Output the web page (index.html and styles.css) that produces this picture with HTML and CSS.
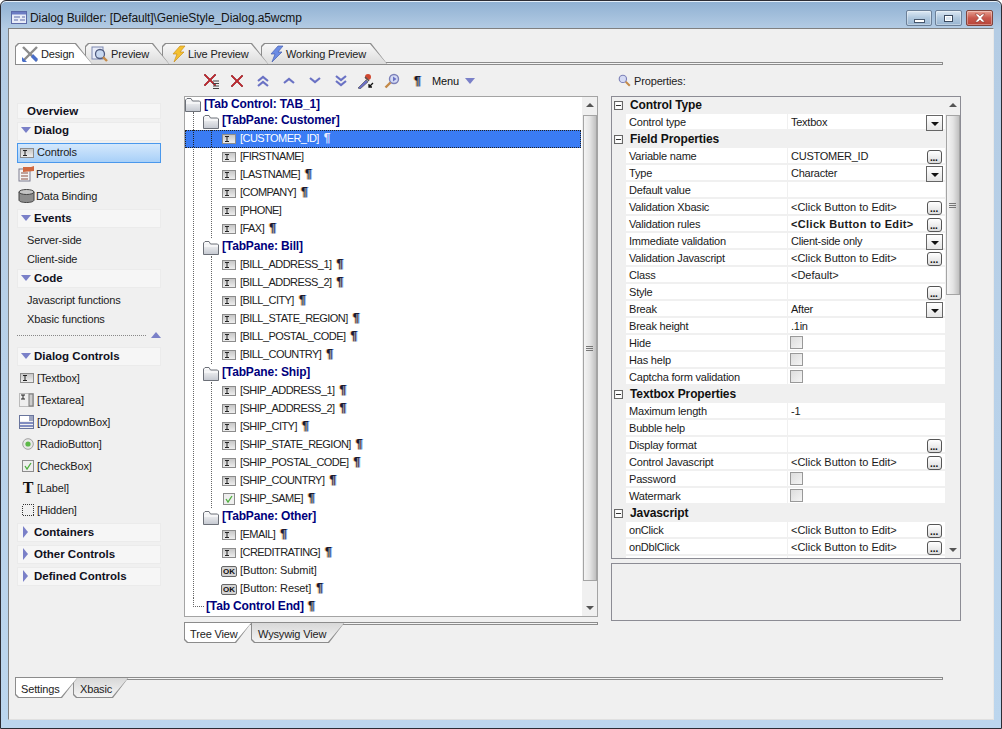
FILE: index.html
```html
<!DOCTYPE html>
<html lang="en">
<head>
    <meta charset="UTF-8">
    <title>Dialog Builder</title>
    <link rel="stylesheet" href="styles.css">
</head>
<body>
<svg class="defs" width="0" height="0">
    <defs>
        <linearGradient id="folderFill" x1="0" y1="0" x2="0" y2="1"><stop offset="0" stop-color="#fff"/><stop offset="1" stop-color="#c4c8d0"/></linearGradient>
        <linearGradient id="boxFill" x1="0" y1="0" x2="0" y2="1"><stop offset="0" stop-color="#c4c4c4"/><stop offset="1" stop-color="#f0f0f0"/></linearGradient>
        <symbol id="i-textbox" viewBox="0 0 14 10">
            <rect x=".5" y=".5" width="13" height="9" fill="url(#boxFill)" stroke="#8c8c8c"/>
            <path d="M3 2.500h4M3 7.500h4M5 2.500v5" fill="none" stroke="#222"/>
        </symbol>
        <symbol id="i-folder" viewBox="0 0 16 15">
            <path d="M.5 14.500V3L2 1.500h4L7.500 4h7l1 1v9.500z" fill="url(#folderFill)" stroke="#6c7078"/>
            <path d="M1 6h14" stroke="#fff"/>
        </symbol>
        <symbol id="i-check" viewBox="0 0 12 12">
            <rect x=".5" y=".5" width="11" height="11" fill="#eee" stroke="#8c8c8c"/>
            <path d="M3 6l2 3 4-6" fill="none" stroke="#4caf3c" stroke-width="1.300"/>
        </symbol>
        <symbol id="i-cross" viewBox="0 0 14 14">
            <path d="M2 1l5 5 5-5 1 1-5 5 5 5-1 1-5-5-5 5-1-1 5-5-5-5z" fill="#c8242c" stroke="#8a1a20" stroke-width=".6"/>
        </symbol>
        <symbol id="i-chevron" viewBox="0 0 12 7">
            <path d="M1 6l5-4 5 4" fill="none" stroke="#6a72c4" stroke-width="2.200"/>
        </symbol>
        <symbol id="i-lens" viewBox="0 0 16 16">
            <circle cx="10" cy="6" r="4.500" fill="#d4daf4" stroke="#7c80b8" stroke-width="1.400"/>
            <path d="M6.500 9.500l-5 5" stroke="#c48a48" stroke-width="2.400"/>
        </symbol>
    </defs>
</svg>

<div class="window">
    <div class="titlebar">
        <svg class="title-icon" width="16" height="13" viewBox="0 0 16 13">
            <rect x=".5" y=".5" width="15" height="12" fill="#e8ecf8" stroke="#5c6aa8"/>
            <rect x="1" y="1" width="14" height="2.500" fill="#6c7cc4"/>
            <path d="M3 6h6M3 9h4M11 6h3M9 9h5" stroke="#5c6aa8"/>
        </svg>
        <span class="title-text">Dialog Builder: [Default]\GenieStyle_Dialog.a5wcmp</span>
        <div class="win-buttons">
            <div class="win-btn"><span class="glyph-min"></span></div>
            <div class="win-btn wide"><span class="glyph-max"></span></div>
            <div class="win-btn wide win-close">
                <svg width="14" height="10" viewBox="0 0 14 10"><path d="M2 1h3l2 2 2-2h3L8.500 5 12 9H9L7 7 5 9H2l3.500-4z" fill="#fff" stroke="#8a3a30" stroke-width=".6"/></svg>
            </div>
        </div>
    </div>

    <div class="client">
        <div class="top-tabs">
            <div class="tab active w-design">
                <svg width="18" height="18" viewBox="0 0 18 18"><path d="M2 2l14 14" stroke="#8c8c8c" stroke-width="2.400"/><path d="M16 2L3 15" stroke="#8c8c8c" stroke-width="2.400"/><path d="M1 12l5 5-4 0-1-1z" fill="#4a6ec8"/><path d="M12 9l5 5-2 3-5-5z" fill="#4a6ec8"/></svg>
                <span>Design</span>
            </div>
            <div class="tab w-preview">
                <svg width="18" height="18" viewBox="0 0 18 18"><rect x="1" y="2" width="11" height="12" fill="#e8ecf8" stroke="#7c88b0"/><circle cx="9" cy="9" r="4.500" fill="#c8d8f0" stroke="#505c80" stroke-width="1.300"/><path d="M12 12l4 4" stroke="#c48a48" stroke-width="2.400"/></svg>
                <span>Preview</span>
            </div>
            <div class="tab w-live">
                <svg width="14" height="18" viewBox="0 0 14 18"><path d="M8 1h5L8 7h4L2 17l3-8H1z" fill="#f4c030" stroke="#c89020" stroke-width=".7"/></svg>
                <span>Live Preview</span>
            </div>
            <div class="tab w-working">
                <svg width="14" height="18" viewBox="0 0 14 18"><path d="M8 1h5L8 7h4L2 17l3-8H1z" fill="#6c8ce4" stroke="#4860b0" stroke-width=".7"/></svg>
                <span>Working Preview</span>
            </div>
            <div class="strip-line"></div>
        </div>

        <div class="main">
            <div class="sidebar">
                <div class="side-head head-short"><span class="no-arrow">Overview</span></div>
                <div class="side-head head-dialog"><i class="arrow-down"></i>Dialog</div>
                <div class="side-item selected"><svg width="14" height="10"><use href="#i-textbox"/></svg>Controls</div>
                <div class="side-item">
                    <svg class="ic-side" width="17" height="16" viewBox="0 0 17 16"><rect x="1" y="3" width="11" height="12" fill="#f4f4f4" stroke="#7c7c90"/><path d="M3 7h7M3 10h7M3 13h7" stroke="#8c5040"/><path d="M5 1h8l3-1v5l-11 1z" fill="#d06840"/></svg>Properties
                </div>
                <div class="side-item">
                    <svg class="ic-side" width="17" height="14" viewBox="0 0 17 14"><path d="M1 3v8c0 1.500 3 2.500 7.500 2.500S16 12.500 16 11V3z" fill="#8c8c8c" stroke="#444"/><ellipse cx="8.500" cy="3" rx="7.500" ry="2.500" fill="#c4c4c4" stroke="#444"/></svg>Data Binding
                </div>
                <div class="side-head head-group"><i class="arrow-down"></i>Events</div>
                <div class="side-link">Server-side</div>
                <div class="side-link">Client-side</div>
                <div class="side-head head-code"><i class="arrow-down"></i>Code</div>
                <div class="side-link first-link">Javascript functions</div>
                <div class="side-link">Xbasic functions</div>
                <div class="side-divider"><div class="dots"></div><i class="arrow-up"></i></div>
                <div class="side-head"><i class="arrow-down"></i>Dialog Controls</div>
                <div class="side-item control first-control"><svg class="ic-wide" width="14" height="10"><use href="#i-textbox"/></svg>[Textbox]</div>
                <div class="side-item control">
                    <svg width="15" height="14" viewBox="0 0 15 14"><rect x=".5" y=".5" width="14" height="13" fill="#eee" stroke="#bbb"/><path d="M2 2h4M2 6h4M4 2v4" stroke="#222"/><rect x="10" y="1" width="4" height="12" fill="#ccc" stroke="#777"/></svg>[Textarea]
                </div>
                <div class="side-item control">
                    <svg width="15" height="14" viewBox="0 0 15 14"><rect x=".5" y=".5" width="14" height="13" fill="#f0f0f0" stroke="#68749c"/><rect x="1" y="1" width="10" height="5" fill="#fff"/><rect x="10" y="1" width="4" height="5" fill="#9ca4c0"/><path d="M1 8h13M1 11h13" stroke="#5c6cb0" stroke-width="1.500"/></svg>[DropdownBox]
                </div>
                <div class="side-item control">
                    <svg class="ic-small" width="12" height="12" viewBox="0 0 12 12"><circle cx="6" cy="6" r="5.300" fill="#e8e8e8" stroke="#a0a0a0"/><circle cx="6" cy="6" r="2.600" fill="#5cb848"/></svg>[RadioButton]
                </div>
                <div class="side-item control"><svg class="ic-small" width="12" height="12"><use href="#i-check"/></svg>[CheckBox]</div>
                <div class="side-item control"><span class="label-t">T</span>[Label]</div>
                <div class="side-item control">
                    <svg class="ic-small" width="12" height="12" viewBox="0 0 12 12"><rect x=".5" y=".5" width="11" height="11" fill="none" stroke="#333" stroke-dasharray="1 1" shape-rendering="crispEdges"/></svg>[Hidden]
                </div>
                <div class="side-head head-group"><i class="arrow-right"></i>Containers</div>
                <div class="side-head head-gap"><i class="arrow-right"></i>Other Controls</div>
                <div class="side-head head-gap"><i class="arrow-right"></i>Defined Controls</div>
            </div>

            <div class="center">
                <div class="toolbar">
                    <svg class="tool t-first" width="17" height="16" viewBox="0 0 17 16"><use href="#i-cross" width="14" height="14"/><path d="M10 8h6M10 10.500h6M10 13h6M10 15.500h6" stroke="#444"/></svg>
                    <svg class="tool t-cross" width="14" height="14"><use href="#i-cross"/></svg>
                    <svg class="tool" width="12" height="12" viewBox="0 0 12 12"><use href="#i-chevron" width="12" height="7"/><use href="#i-chevron" y="5" width="12" height="7"/></svg>
                    <svg class="tool" width="12" height="7"><use href="#i-chevron"/></svg>
                    <svg class="tool flip" width="12" height="7"><use href="#i-chevron"/></svg>
                    <svg class="tool flip t-gap" width="12" height="12" viewBox="0 0 12 12"><use href="#i-chevron" width="12" height="7"/><use href="#i-chevron" y="5" width="12" height="7"/></svg>
                    <svg class="tool t-gap" width="17" height="16" viewBox="0 0 17 16"><path d="M1 15l8-8 2 2-8 7z" fill="#6c70c8" stroke="#444" stroke-width=".6"/><circle cx="11" cy="4" r="3" fill="#d04830"/><path d="M8 4l4 4" stroke="#555" stroke-width="1.500"/><path d="M16 10l-4 4M12 11v3h3" fill="none" stroke="#111" stroke-width="1.300"/></svg>
                    <svg class="tool t-lens" width="16" height="16" viewBox="0 0 16 16"><use href="#i-lens" width="16" height="16"/><path d="M9 3.500v5l3.500-2.500z" fill="#6a72c4"/></svg>
                    <span class="pil tool-pil">¶</span>
                    <span class="tool-menu">Menu</span>
                    <i class="arrow-down menu-arrow"></i>
                </div>

                <div class="tree-panel">
                    <div class="tree">
                        <div class="tree-root"><svg width="16" height="15"><use href="#i-folder"/></svg><b>[Tab Control: TAB_1]</b></div>
                        <div class="level1">
                            <div class="pane"><svg width="16" height="15"><use href="#i-folder"/></svg><b>[TabPane: Customer]</b></div>
                            <div class="level2">
                                <div class="row current"><svg width="14" height="10"><use href="#i-textbox"/></svg>[CUSTOMER_ID]<span class="pil">¶</span></div>
                                <div class="row"><svg width="14" height="10"><use href="#i-textbox"/></svg>[FIRSTNAME]</div>
                                <div class="row"><svg width="14" height="10"><use href="#i-textbox"/></svg>[LASTNAME]<span class="pil">¶</span></div>
                                <div class="row"><svg width="14" height="10"><use href="#i-textbox"/></svg>[COMPANY]<span class="pil">¶</span></div>
                                <div class="row"><svg width="14" height="10"><use href="#i-textbox"/></svg>[PHONE]</div>
                                <div class="row"><svg width="14" height="10"><use href="#i-textbox"/></svg>[FAX]<span class="pil">¶</span></div>
                            </div>
                            <div class="pane"><svg width="16" height="15"><use href="#i-folder"/></svg><b>[TabPane: Bill]</b></div>
                            <div class="level2">
                                <div class="row"><svg width="14" height="10"><use href="#i-textbox"/></svg>[BILL_ADDRESS_1]<span class="pil">¶</span></div>
                                <div class="row"><svg width="14" height="10"><use href="#i-textbox"/></svg>[BILL_ADDRESS_2]<span class="pil">¶</span></div>
                                <div class="row"><svg width="14" height="10"><use href="#i-textbox"/></svg>[BILL_CITY]<span class="pil">¶</span></div>
                                <div class="row"><svg width="14" height="10"><use href="#i-textbox"/></svg>[BILL_STATE_REGION]<span class="pil">¶</span></div>
                                <div class="row"><svg width="14" height="10"><use href="#i-textbox"/></svg>[BILL_POSTAL_CODE]<span class="pil">¶</span></div>
                                <div class="row"><svg width="14" height="10"><use href="#i-textbox"/></svg>[BILL_COUNTRY]<span class="pil">¶</span></div>
                            </div>
                            <div class="pane"><svg width="16" height="15"><use href="#i-folder"/></svg><b>[TabPane: Ship]</b></div>
                            <div class="level2">
                                <div class="row"><svg width="14" height="10"><use href="#i-textbox"/></svg>[SHIP_ADDRESS_1]<span class="pil">¶</span></div>
                                <div class="row"><svg width="14" height="10"><use href="#i-textbox"/></svg>[SHIP_ADDRESS_2]<span class="pil">¶</span></div>
                                <div class="row"><svg width="14" height="10"><use href="#i-textbox"/></svg>[SHIP_CITY]<span class="pil">¶</span></div>
                                <div class="row"><svg width="14" height="10"><use href="#i-textbox"/></svg>[SHIP_STATE_REGION]<span class="pil">¶</span></div>
                                <div class="row"><svg width="14" height="10"><use href="#i-textbox"/></svg>[SHIP_POSTAL_CODE]<span class="pil">¶</span></div>
                                <div class="row"><svg width="14" height="10"><use href="#i-textbox"/></svg>[SHIP_COUNTRY]<span class="pil">¶</span></div>
                                <div class="row"><svg class="row-check" width="12" height="12"><use href="#i-check"/></svg>[SHIP_SAME]<span class="pil">¶</span></div>
                            </div>
                            <div class="pane"><svg width="16" height="15"><use href="#i-folder"/></svg><b>[TabPane: Other]</b></div>
                            <div class="level2 no-line">
                                <div class="row"><svg width="14" height="10"><use href="#i-textbox"/></svg>[EMAIL]<span class="pil">¶</span></div>
                                <div class="row"><svg width="14" height="10"><use href="#i-textbox"/></svg>[CREDITRATING]<span class="pil">¶</span></div>
                                <div class="row btn-row"><span class="ok-icon">OK</span>[Button: Submit]</div>
                                <div class="row btn-row"><span class="ok-icon">OK</span>[Button: Reset]<span class="pil">¶</span></div>
                            </div>
                        </div>
                        <div class="tree-end"><span class="end-dots"></span><b>[Tab Control End]</b><span class="pil">¶</span></div>
                    </div>
                    <div class="scrollbar">
                        <i class="sb-up"></i>
                        <div class="sb-thumb tree-thumb"><span class="grip"></span></div>
                        <i class="sb-down"></i>
                    </div>
                </div>

                <div class="low-tabs">
                    <div class="low-line"></div>
                    <div class="ltab active w-tree">Tree View</div>
                    <div class="ltab w-wysywig">Wysywig View</div>
                </div>
            </div>

            <div class="props">
                <div class="props-head"><svg width="13" height="13" viewBox="0 0 16 16" class="flip-x"><use href="#i-lens" width="16" height="16"/></svg><span>Properties:</span></div>
                <div class="props-panel">
                    <div class="prop-list">
                        <div class="section"><i class="minus"></i>Control Type</div>
                        <div class="prop"><div class="p-name">Control type</div><div class="p-val">Textbox<i class="dd"></i></div></div>
                        <div class="section"><i class="minus"></i>Field Properties</div>
                        <div class="prop"><div class="p-name">Variable name</div><div class="p-val">CUSTOMER_ID<i class="more"></i></div></div>
                        <div class="prop"><div class="p-name">Type</div><div class="p-val">Character<i class="dd"></i></div></div>
                        <div class="prop"><div class="p-name">Default value</div><div class="p-val"></div></div>
                        <div class="prop"><div class="p-name">Validation Xbasic</div><div class="p-val click">&lt;Click Button to Edit&gt;<i class="more"></i></div></div>
                        <div class="prop"><div class="p-name">Validation rules</div><div class="p-val"><b>&lt;Click Button to Edit&gt;</b><i class="more"></i></div></div>
                        <div class="prop"><div class="p-name">Immediate validation</div><div class="p-val">Client-side only<i class="dd"></i></div></div>
                        <div class="prop"><div class="p-name">Validation Javascript</div><div class="p-val click">&lt;Click Button to Edit&gt;<i class="more"></i></div></div>
                        <div class="prop"><div class="p-name">Class</div><div class="p-val click">&lt;Default&gt;</div></div>
                        <div class="prop"><div class="p-name">Style</div><div class="p-val"><i class="more"></i></div></div>
                        <div class="prop"><div class="p-name">Break</div><div class="p-val">After<i class="dd"></i></div></div>
                        <div class="prop"><div class="p-name">Break height</div><div class="p-val">.1in</div></div>
                        <div class="prop"><div class="p-name">Hide</div><div class="p-val"><i class="cb"></i></div></div>
                        <div class="prop"><div class="p-name">Has help</div><div class="p-val"><i class="cb"></i></div></div>
                        <div class="prop"><div class="p-name">Captcha form validation</div><div class="p-val"><i class="cb"></i></div></div>
                        <div class="section"><i class="minus"></i>Textbox Properties</div>
                        <div class="prop"><div class="p-name">Maximum length</div><div class="p-val">-1</div></div>
                        <div class="prop"><div class="p-name">Bubble help</div><div class="p-val"></div></div>
                        <div class="prop"><div class="p-name">Display format</div><div class="p-val"><i class="more"></i></div></div>
                        <div class="prop"><div class="p-name">Control Javascript</div><div class="p-val click">&lt;Click Button to Edit&gt;<i class="more"></i></div></div>
                        <div class="prop"><div class="p-name">Password</div><div class="p-val"><i class="cb"></i></div></div>
                        <div class="prop"><div class="p-name">Watermark</div><div class="p-val"><i class="cb"></i></div></div>
                        <div class="section"><i class="minus"></i>Javascript</div>
                        <div class="prop"><div class="p-name">onClick</div><div class="p-val click">&lt;Click Button to Edit&gt;<i class="more"></i></div></div>
                        <div class="prop"><div class="p-name">onDblClick</div><div class="p-val click">&lt;Click Button to Edit&gt;<i class="more"></i></div></div>
                        <div class="prop"><div class="p-name"></div><div class="p-val"><i class="more"></i></div></div>
                    </div>
                    <div class="scrollbar">
                        <i class="sb-up"></i>
                        <div class="sb-thumb props-thumb"><span class="grip"></span></div>
                        <i class="sb-down"></i>
                    </div>
                </div>
                <div class="desc-box"></div>
            </div>
        </div>

        <div class="bottom-tabs">
            <div class="low-line"></div>
            <div class="ltab active w-settings">Settings</div>
            <div class="ltab w-xbasic">Xbasic</div>
        </div>
    </div>
</div>
</body>
</html>
```

FILE: styles.css
```css
html, body {
    margin: 0;
    padding: 0;
    background: #fff;
}
body {
    font-family: "Liberation Sans", Arial, sans-serif;
    font-size: 11px;
    letter-spacing: -0.15px;
    color: #1a1a1a;
    overflow: hidden;
}
.defs {
    display: block;
    height: 0;
}
svg {
    flex: none;
}

/* window frame */
.window {
    width: 1002px;
    height: 729px;
    box-sizing: border-box;
    padding: 0 7px 8px 7px;
    border: 1px solid #2c2c34;
    border-radius: 6px 6px 0 0;
    background: linear-gradient(#8fb0d2 0, #b4cce4 28px, #bcd6ee 100%);
    display: flex;
    flex-direction: column;
    box-shadow: inset 0 1px 0 #e4eef8;
}
.titlebar {
    height: 27px;
    display: flex;
    align-items: flex-start;
    flex: none;
}
.title-icon {
    margin: 10px 3px 0 3px;
}
.title-text {
    font-size: 12px;
    line-height: 14px;
    color: #141414;
    letter-spacing: -0.1px;
    margin-top: 10px;
}
.win-buttons {
    margin-left: auto;
    margin-right: 1px;
    margin-top: 9px;
    display: flex;
    gap: 3px;
}
.win-btn {
    width: 26px;
    height: 16px;
    box-sizing: border-box;
    border: 1px solid #6c8098;
    border-radius: 2px;
    background: linear-gradient(#dce8f4, #b0c8de 50%, #98b4d0);
    display: flex;
    align-items: center;
    justify-content: center;
    box-shadow: inset 0 0 0 1px rgba(255, 255, 255, .35);
}
.wide {
    width: 27px;
}
.win-close {
    margin-left: 1px;
    background: linear-gradient(#e8a090, #c8584c 50%, #b84438);
    border-color: #80443c;
}
.glyph-min {
    width: 9px;
    height: 2px;
    margin-top: 5px;
    background: #fff;
    border: 1px solid #46566c;
}
.glyph-max {
    width: 7px;
    height: 5px;
    background: #dce8f4;
    border: 1px solid #3a4a60;
    box-shadow: inset 0 0 0 1px #fff;
}

.client {
    flex: 1;
    background: #f0f0f0;
    border: 1px solid #808080;
    border-right-color: #e8e8e8;
    border-bottom-color: #e0e0e0;
    display: flex;
    flex-direction: column;
    padding-top: 14px;
    min-height: 0;
}

/* top tab strip */
.top-tabs {
    display: flex;
    height: 22px;
    margin-left: 6px;
    width: 928px;
    flex: none;
    position: relative;
}
.tab {
    position: relative;
    height: 22px;
    display: flex;
    align-items: center;
    gap: 2px;
    padding-left: 6px;
    box-sizing: border-box;
    margin-right: -8px;
    color: #222;
}
.tab span, .tab svg {
    position: relative;
    z-index: 1;
}
.tab::before, .tab::after {
    content: "";
    position: absolute;
    clip-path: polygon(0 3px, 3px 0, calc(100% - 17px) 0, 100% 100%, 0 100%);
}
.tab::before {
    inset: 0;
    background: #8c8c8c;
}
.tab::after {
    inset: 1px 1px 1px 1px;
    background: linear-gradient(#f8f8f8, #dcdcdc);
}
.tab.active::after {
    background: #fff;
}
.w-design { width: 78px; z-index: 4; }
.w-preview { width: 85px; z-index: 3; padding-left: 6px; }
.w-live { width: 107px; z-index: 2; padding-left: 10px; }
.w-working { width: 127px; z-index: 1; padding-left: 9px; }
.strip-line {
    position: absolute;
    left: 70px;
    right: 0;
    bottom: 0;
    height: 3px;
    box-sizing: border-box;
    border: 1px solid #8c8c8c;
    background: #f4f4f4;
}

/* main columns */
.main {
    display: flex;
    height: 578px;
    flex: none;
    padding-left: 8px;
}
.sidebar {
    width: 144px;
    margin-right: 23px;
    padding-top: 38px;
    flex: none;
}
.center {
    width: 414px;
    margin-right: 13px;
    flex: none;
}
.props {
    width: 350px;
    flex: none;
}

/* sidebar */
.side-head {
    height: 19px;
    box-sizing: border-box;
    background: #f6f6f6;
    border: 1px solid #ebebeb;
    display: flex;
    align-items: center;
    font-weight: bold;
    font-size: 11.500px;
    letter-spacing: 0;
    color: #10101c;
    padding: 0 0 1px 3px;
}
.head-short {
    height: 16px;
    margin-bottom: 3px;
    padding-bottom: 0;
}
.no-arrow {
    padding-left: 6px;
}
.head-dialog {
    margin-bottom: 2px;
    padding-bottom: 3px;
}
.head-group {
    margin-top: 2px;
}
.head-code {
    margin-top: 1px;
}
.head-gap {
    margin-top: 3px;
}
.side-item {
    height: 22px;
    box-sizing: border-box;
    display: flex;
    align-items: center;
    gap: 1px;
    padding-left: 1px;
}
.side-item.selected {
    height: 20px;
    border: 1px solid #4a98ec;
    background: linear-gradient(#d4e8fc, #a8d0f8);
    padding: 0 0 2px 2px;
    gap: 3px;
}
.selected svg {
    position: relative;
    top: 1px;
}
.control {
    display: grid;
    grid-template-columns: 18px 1fr;
    align-items: center;
    justify-items: start;
    gap: 0;
    padding-left: 2px;
}
.ic-wide {
    margin-left: 1px;
}
.ic-small {
    margin-left: 3px;
}
.first-control {
    margin-top: 1px;
}
.side-link {
    height: 19px;
    display: flex;
    align-items: center;
    padding-left: 10px;
}
.first-link {
    margin-top: 2px;
}
.side-head + .side-link:not(.first-link) {
    margin-top: 2px;
}
.side-divider {
    height: 19px;
    display: flex;
    align-items: flex-start;
}
.dots {
    width: 130px;
    margin-top: 7px;
    border-top: 1px dotted #888;
}
.label-t {
    font-family: "Liberation Serif", serif;
    font-weight: bold;
    font-size: 16px;
    width: 12px;
    margin-left: 3px;
    text-align: center;
    color: #111;
}
.arrow-down {
    width: 0;
    height: 0;
    border-left: 5px solid transparent;
    border-right: 5px solid transparent;
    border-top: 6px solid #7a80c8;
    margin-right: 3px;
    display: block;
}
.arrow-right {
    width: 0;
    height: 0;
    border-top: 6px solid transparent;
    border-bottom: 6px solid transparent;
    border-left: 5px solid #7a80c8;
    margin: 0 6px 0 2px;
    display: block;
}
.arrow-up {
    width: 0;
    height: 0;
    border-left: 5px solid transparent;
    border-right: 5px solid transparent;
    border-bottom: 6px solid #7a80c8;
    margin: 4px 0 0 5px;
    display: block;
}

/* toolbar over the tree */
.toolbar {
    height: 31px;
    box-sizing: border-box;
    display: flex;
    align-items: center;
    padding: 0 0 0 19px;
}
.tool {
    margin-right: 14px;
}
.t-first {
    margin-right: 10px;
}
.t-cross {
    margin-right: 13px;
}
.t-gap {
    margin-right: 10px;
}
.t-lens {
    margin-right: 10px;
}
.flip {
    transform: scaleY(-1);
}
.flip-x {
    transform: scaleX(-1);
}
.tool-pil {
    font-size: 13px;
    width: 8px;
    margin: 0 10px 0 0;
}
.tool-menu {
    width: 33px;
    color: #111;
}
.menu-arrow {
    margin: 0;
}
.pil {
    font-weight: bold;
    font-size: 12px;
    color: #1c1c30;
    margin-left: 4px;
    letter-spacing: 0;
    text-shadow: -1px 0 rgba(240, 160, 60, .5), 1px 0 rgba(60, 120, 220, .7);
}

/* tree panel */
.tree-panel {
    height: 521px;
    box-sizing: border-box;
    border: 1px solid #a4a4a4;
    background: #fff;
    display: flex;
}
.tree {
    flex: 1;
    min-width: 0;
    color: #222;
}
.tree b {
    font-size: 12px;
    color: #00007c;
}
.tree-root {
    height: 15px;
    display: flex;
    align-items: center;
    gap: 3px;
    padding-bottom: 1px;
    box-sizing: border-box;
}
.level1 {
    margin-left: 8px;
    border-left: 1px dotted #666;
}
.pane {
    height: 18px;
    box-sizing: border-box;
    display: flex;
    align-items: center;
    gap: 3px;
    padding: 0 0 2px 9px;
}
.pane svg {
    position: relative;
    top: 1px;
}
.level2 {
    margin-left: 17px;
    border-left: 1px dotted #666;
}
.no-line {
    border-left-color: transparent;
}
.row {
    height: 18px;
    box-sizing: border-box;
    display: flex;
    align-items: center;
    gap: 4px;
    padding: 0 0 2px 10px;
    white-space: nowrap;
    letter-spacing: -0.55px;
}
.row svg {
    position: relative;
    top: 1px;
}
.btn-row {
    letter-spacing: -0.1px;
}
.row .pil {
    margin-left: 1px;
}
.row-check {
    margin: 0 1px 0 1px;
}
.current {
    background-color: #3a7cf4;
    background-image: repeating-linear-gradient(#222 0 1px, transparent 1px 2px), repeating-linear-gradient(#222 0 1px, transparent 1px 2px);
    background-size: 1px 100%;
    background-repeat: no-repeat;
    background-position: 8px 0, 26px 0;
    color: #fff;
    margin-left: -27px;
    padding-left: 37px;
    width: 396px;
    outline: 1px dotted #222;
    outline-offset: -1px;
}
.current .pil {
    color: #e8e8ff;
    text-shadow: none;
}
.ok-icon {
    width: 14px;
    height: 9px;
    margin: 2px -1px 0 -1px;
    background: #d4d4d4;
    border: 1px solid #666;
    border-radius: 2px;
    font-size: 8px;
    font-weight: bold;
    letter-spacing: 0;
    line-height: 9px;
    text-align: center;
    color: #111;
}
.tree-end {
    height: 18px;
    box-sizing: border-box;
    display: flex;
    align-items: center;
    padding: 0 0 2px 8px;
}
.end-dots {
    width: 11px;
    height: 9px;
    margin-right: 2px;
    box-sizing: border-box;
    align-self: flex-start;
    border-left: 1px dotted #666;
    border-bottom: 1px dotted #666;
}

/* scrollbars */
.scrollbar {
    width: 15px;
    flex: none;
    background: #f0f0f0;
    display: flex;
    flex-direction: column;
    align-items: center;
}
.sb-up, .sb-down {
    display: block;
    width: 0;
    height: 0;
    border-left: 4px solid transparent;
    border-right: 4px solid transparent;
}
.sb-up {
    margin-top: 6px;
    border-bottom: 4px solid #555;
}
.sb-down {
    margin-top: auto;
    margin-bottom: 6px;
    border-top: 4px solid #555;
}
.sb-thumb {
    width: 14px;
    margin-top: 8px;
    box-sizing: border-box;
    border: 1px solid #a4a4a4;
    background: linear-gradient(90deg, #f4f4f4, #e4e4e4 50%, #c0c0c0);
    display: flex;
    align-items: center;
    justify-content: center;
}
.tree-thumb {
    height: 466px;
}
.props-thumb {
    height: 180px;
}
.grip {
    width: 7px;
    height: 5px;
    background: repeating-linear-gradient(#777 0 1px, transparent 1px 2px);
}

/* lower tabs */
.low-tabs, .bottom-tabs {
    display: flex;
    position: relative;
    flex: none;
    z-index: 0;
}
.low-tabs {
    margin-top: 5px;
    height: 21px;
}
.bottom-tabs {
    margin-top: 34px;
    margin-left: 6px;
    width: 928px;
    height: 21px;
}
.low-line {
    position: absolute;
    top: 0;
    left: 0;
    right: 0;
    height: 3px;
    box-sizing: border-box;
    border: 1px solid #8c8c8c;
    background: #f4f4f4;
}
.ltab {
    position: relative;
    height: 21px;
    display: flex;
    align-items: center;
    padding: 2px 0 0 6px;
    box-sizing: border-box;
    color: #222;
}
.ltab::before, .ltab::after {
    content: "";
    position: absolute;
    clip-path: polygon(0 0, 100% 0, calc(100% - 16px) 100%, 3px 100%, 0 calc(100% - 3px));
    z-index: -1;
}
.ltab::before {
    inset: 0;
    background: #8c8c8c;
}
.ltab::after {
    inset: 1px;
    background: linear-gradient(#d8d8d8, #f4f4f4);
}
.ltab.active {
    z-index: 2;
}
.ltab.active::after {
    background: #fff;
}
.w-tree { width: 68px; }
.w-wysywig { width: 94px; margin-left: -1px; padding-left: 7px; z-index: 1; }
.w-settings { width: 63px; }
.w-xbasic { width: 56px; margin-left: -5px; padding-left: 7px; z-index: 1; }

/* properties */
.props-head {
    height: 31px;
    box-sizing: border-box;
    display: flex;
    align-items: center;
    gap: 3px;
    padding-left: 7px;
    color: #222;
}
.props-panel {
    height: 463px;
    box-sizing: border-box;
    border: 1px solid #8c8c94;
    background: #f0f0f0;
    display: flex;
    overflow: hidden;
}
.prop-list {
    width: 333px;
    flex: none;
    height: 461px;
    overflow: hidden;
}
.section {
    height: 17px;
    box-sizing: border-box;
    padding-bottom: 2px;
    display: flex;
    align-items: center;
    font-weight: bold;
    font-size: 12px;
    letter-spacing: -0.1px;
    color: #111;
}
.minus {
    width: 7px;
    height: 7px;
    margin: 2px 7px 0 2px;
    border: 1px solid #666;
    background: linear-gradient(#fff 3px, #333 3px, #333 4px, #fff 4px);
    background-size: 5px 100%;
    background-repeat: no-repeat;
    background-position: 1px 0;
    display: block;
}
.prop {
    height: 17px;
    box-sizing: border-box;
    display: flex;
    padding: 0 0 2px 14px;
}
.p-name {
    width: 161px;
    background: #fff;
    margin-right: 1px;
    padding-left: 3px;
    box-sizing: border-box;
    line-height: 17px;
    letter-spacing: -0.2px;
}
.p-val {
    flex: 1;
    background: #fff;
    padding-left: 3px;
    position: relative;
    line-height: 17px;
    letter-spacing: -0.25px;
}
.p-val.click {
    letter-spacing: 0;
}
.p-val b {
    letter-spacing: 0.35px;
}
.more, .dd {
    position: absolute;
    box-sizing: border-box;
    display: block;
}
.more {
    right: 3px;
    top: 2px;
    width: 15px;
    height: 14px;
    border: 1px solid #555;
    border-radius: 3px;
    background: linear-gradient(#fff, #dcdcdc);
}
.more::after {
    content: "...";
    position: absolute;
    left: 2px;
    right: 0;
    bottom: 0;
    font-size: 10px;
    font-weight: bold;
    line-height: 10px;
    font-style: normal;
    color: #111;
}
.dd {
    right: 2px;
    top: 1px;
    width: 17px;
    height: 16px;
    border: 1px solid #666;
    background: linear-gradient(#fff, #e4e4e4);
}
.dd::after {
    content: "";
    position: absolute;
    left: 4px;
    top: 6px;
    border-left: 4px solid transparent;
    border-right: 4px solid transparent;
    border-top: 4px solid #111;
}
.cb {
    display: block;
    position: relative;
    top: 1px;
    left: -1px;
    width: 13px;
    height: 13px;
    box-sizing: border-box;
    border: 1px solid #999;
    background: linear-gradient(135deg, #ddd, #f4f4f4);
}
.desc-box {
    height: 58px;
    box-sizing: border-box;
    margin-top: 4px;
    border: 1px solid #8c8c94;
}
```
